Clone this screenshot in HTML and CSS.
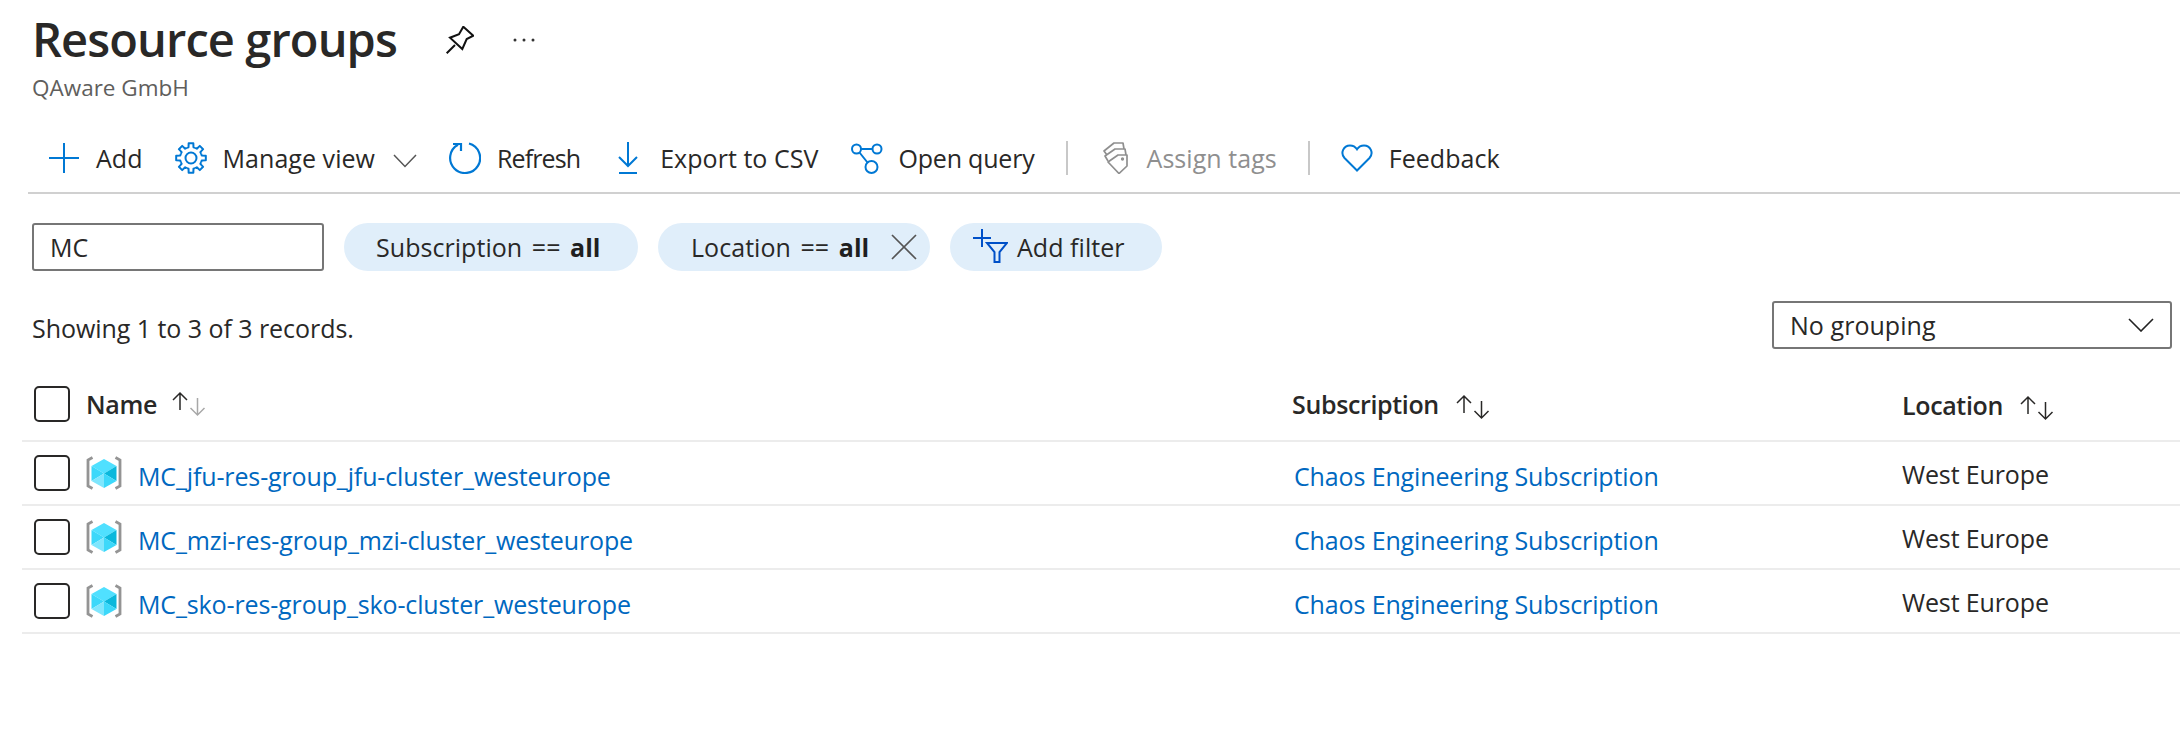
FILE: index.html
```html
<!DOCTYPE html>
<html lang="en">
<head>
<meta charset="utf-8">
<title>Resource groups</title>
<link rel="stylesheet" href="styles.css">
</head>
<body>
<svg class="defs" width="0" height="0" aria-hidden="true">
  <symbol id="rg" viewBox="0 0 36 36">
    <path d="M6.500 2.500 2 5V31L6.500 33.500" fill="none" stroke="#949494" stroke-width="2.800"/>
    <path d="M29.500 2.500 34 5V31L29.500 33.500" fill="none" stroke="#949494" stroke-width="2.800"/>
    <path d="M18 4 30.500 11 18 18.500 5.500 11Z" fill="#50e0ff"/>
    <path d="M30.500 11V26L18 18.500Z" fill="#0ab8dc"/>
    <path d="M5.500 11V26L18 18.500Z" fill="#3cd8fa"/>
    <path d="M5.500 26 18 18.500V33Z" fill="#7fe6fd"/>
    <path d="M30.500 26 18 18.500V33Z" fill="#3cd8fa"/>
  </symbol>
  <symbol id="sort" viewBox="0 0 34 26">
    <path d="M8 19V2M1 9 8 2l7 7" fill="none" stroke="currentColor" stroke-width="1.500"/>
  </symbol>
  <symbol id="sort-down" viewBox="0 0 34 26">
    <path d="M25.500 7V24M18.500 17l7 7 7-7" fill="none" stroke="currentColor" stroke-width="1.500"/>
  </symbol>
  <symbol id="tooth" viewBox="0 0 32 32">
    <path d="M11.790 5.840 13.530 5.280 13.650 1.180H18.350L18.470 5.280 20.210 5.840" fill="none" stroke="#0078d4" stroke-width="2" stroke-linejoin="round"/>
  </symbol>
</svg>

<header class="title-row">
  <div class="title-line">
    <h1 class="title">Resource groups</h1>
    <svg class="pin" viewBox="0 0 29 28" width="29" height="28"><path d="M1.700 27.300 10 19M18.300 .7 28.300 9.700 21.700 13 17.300 23 5 11.700 14 8.300Z" fill="none" stroke="#111" stroke-width="2"/></svg>
    <svg class="more" viewBox="0 0 24 4" width="24" height="4"><circle cx="3" cy="2" r="1.500"/><circle cx="12" cy="2" r="1.500"/><circle cx="21" cy="2" r="1.500"/></svg>
  </div>
  <div class="subtitle">QAware GmbH</div>
</header>

<nav class="toolbar">
  <div class="tool">
    <svg class="ico" viewBox="0 0 32 32"><path d="M16 1V31M1 16H31" fill="none" stroke="#0078d4" stroke-width="2"/></svg>
    <span>Add</span>
  </div>
  <div class="tool">
    <svg class="ico" viewBox="0 0 32 32">
      <circle cx="16" cy="16" r="5.500" fill="none" stroke="#0078d4" stroke-width="2"/>
      <use href="#tooth" width="32" height="32"/>
      <use href="#tooth" width="32" height="32" transform="rotate(45 16 16)"/>
      <use href="#tooth" width="32" height="32" transform="rotate(90 16 16)"/>
      <use href="#tooth" width="32" height="32" transform="rotate(135 16 16)"/>
      <use href="#tooth" width="32" height="32" transform="rotate(180 16 16)"/>
      <use href="#tooth" width="32" height="32" transform="rotate(225 16 16)"/>
      <use href="#tooth" width="32" height="32" transform="rotate(270 16 16)"/>
      <use href="#tooth" width="32" height="32" transform="rotate(315 16 16)"/>
    </svg>
    <span>Manage view</span>
    <svg class="chev" viewBox="0 0 24 14"><path d="M1 1 12 12.500 23 1" fill="none" stroke="#555" stroke-width="1.500"/></svg>
  </div>
  <div class="tool">
    <svg class="ico" viewBox="0 0 32 32"><path d="M20 1.500A15 15 0 1 1 9 2.800M4 2H12V9" fill="none" stroke="#0078d4" stroke-width="2.200"/></svg>
    <span class="tight">Refresh</span>
  </div>
  <div class="tool">
    <svg class="ico" viewBox="0 0 32 32"><path d="M16 0V24M7 15 16 24l9-9M7 31H25" fill="none" stroke="#0078d4" stroke-width="2"/></svg>
    <span>Export to CSV</span>
  </div>
  <div class="tool">
    <svg class="ico" viewBox="0 0 32 32"><g fill="none" stroke="#0078d4" stroke-width="2"><circle cx="5.500" cy="7" r="4.500"/><circle cx="26" cy="7" r="4.500"/><circle cx="20.500" cy="25" r="6"/><path d="M10 7H21.500M8.500 10.500 16.500 20.500"/></g></svg>
    <span class="snug">Open query</span>
  </div>
  <i class="sep"></i>
  <div class="tool tool-off">
    <svg class="ico" viewBox="0 0 32 32"><g fill="none" stroke="#8f8f8f" stroke-width="1.700" stroke-linejoin="round"><path d="M8 13 5 9 15 1H24L25 7"/><path d="M9 19 6 14 16 7H26L27 13"/><path d="M9 20 19 13H28V24L20 31.500Z" fill="#fff"/><circle cx="23.500" cy="17" r=".8"/></g></svg>
    <span>Assign tags</span>
  </div>
  <i class="sep"></i>
  <div class="tool">
    <svg class="ico" viewBox="0 0 32 32"><path d="M16 28.500 3.500 16C-1 11 2.500 3.500 9 3.500c3 0 5.500 1.500 7 3.800 1.500-2.300 4-3.800 7-3.800 6.500 0 10 7.500 5.500 12.500Z" fill="none" stroke="#0078d4" stroke-width="2"/></svg>
    <span>Feedback</span>
  </div>
</nav>

<section class="filters">
  <div class="search">MC</div>
  <div class="pill pill-sub"><span>Subscription == <b>all</b></span></div>
  <div class="pill pill-loc"><span>Location == <b>all</b></span>
    <svg class="x" viewBox="0 0 26 26"><path d="M1 1 25 25M25 1 1 25" fill="none" stroke="#555" stroke-width="1.700"/></svg>
  </div>
  <div class="pill pill-add">
    <svg class="funnel" viewBox="0 0 36 36"><path d="M10 1V19M1 10H19M15 15H35L27.500 24V34H22.500V24Z" fill="none" stroke="#0050c8" stroke-width="2"/></svg>
    <span>Add filter</span>
  </div>
</section>

<section class="summary">
  <div class="count">Showing 1 to 3 of 3 records.</div>
  <div class="group">
    <span>No grouping</span>
    <svg class="chev-g" viewBox="0 0 26 14"><path d="M1 1 13 13 25 1" fill="none" stroke="#222" stroke-width="1.600"/></svg>
  </div>
</section>

<section class="table">
  <div class="row head">
    <span class="check"></span>
    <div class="cell-name"><b>Name</b><span class="sort"><svg width="34" height="26"><use href="#sort"/></svg><svg class="muted" width="34" height="26"><use href="#sort-down"/></svg></span></div>
    <div class="cell-sub head-sub"><b>Subscription</b><span class="sort"><svg width="34" height="26"><use href="#sort"/></svg><svg width="34" height="26"><use href="#sort-down"/></svg></span></div>
    <div class="cell-loc"><b>Location</b><span class="sort"><svg width="34" height="26"><use href="#sort"/></svg><svg width="34" height="26"><use href="#sort-down"/></svg></span></div>
  </div>
  <div class="row">
    <span class="check"></span>
    <div class="cell-name"><svg class="rg" width="36" height="36"><use href="#rg"/></svg><a class="link">MC_jfu-res-group_jfu-cluster_westeurope</a></div>
    <a class="link cell-sub">Chaos Engineering Subscription</a>
    <div class="cell-loc">West Europe</div>
  </div>
  <div class="row">
    <span class="check"></span>
    <div class="cell-name"><svg class="rg" width="36" height="36"><use href="#rg"/></svg><a class="link">MC_mzi-res-group_mzi-cluster_westeurope</a></div>
    <a class="link cell-sub">Chaos Engineering Subscription</a>
    <div class="cell-loc">West Europe</div>
  </div>
  <div class="row">
    <span class="check"></span>
    <div class="cell-name"><svg class="rg" width="36" height="36"><use href="#rg"/></svg><a class="link">MC_sko-res-group_sko-cluster_westeurope</a></div>
    <a class="link cell-sub">Chaos Engineering Subscription</a>
    <div class="cell-loc">West Europe</div>
  </div>
</section>
</body>
</html>
```
FILE: styles.css
```css
* { box-sizing: border-box; }
html, body { margin: 0; height: 100%; overflow: hidden; }
body {
  background: #fff;
  color: #292827;
  font-family: "Open Sans", "Noto Sans", sans-serif;
  font-size: 25px;
  letter-spacing: 0.05px;
  padding: 0 8px 0 0;
}
.defs { position: absolute; }

.title-row { padding: 7px 0 0 32px; height: 108px; }
.title-line { display: flex; align-items: center; height: 64px; }
.title { margin: 0; font-size: 47px; font-weight: 600; letter-spacing: -0.9px; line-height: 64px; color: #292827; }
.pin { margin-left: 48px; margin-top: 2px; }
.more { margin-left: 38px; margin-top: 2px; fill: #333; }
.subtitle { font-size: 22.500px; color: #605e5c; line-height: 30px; letter-spacing: 0; margin-top: 2px; }

.toolbar {
  display: flex; align-items: center; gap: 32px;
  height: 86px; margin-left: 28px; padding: 16px 0 0 20px; margin-right: -8px;
  border-bottom: 2px solid #d0d0d0;
}
.tool { display: flex; align-items: center; gap: 16px; }
.tight { letter-spacing: -0.9px; }
.snug { letter-spacing: -0.2px; }
.ico { width: 32px; height: 32px; flex: none; }
.chev { width: 24px; height: 14px; margin-left: 2px; margin-top: 6px; }
.tool-off { color: #8f8f8f; }
.sep { width: 2px; height: 34px; background: #c8c8c8; margin: 0 -1px; }

.filters { display: flex; align-items: center; gap: 20px; margin: 29px 0 0 32px; height: 48px; }
.search {
  width: 292px; height: 48px; padding: 0 16px;
  border: 2px solid #767676; border-radius: 3px;
  display: flex; align-items: center;
}
.pill { height: 48px; border-radius: 24px; background: #e0eefa; display: flex; align-items: center; white-space: pre; }
.pill-sub, .pill-loc { word-spacing: 3px; }
.pill b { font-weight: 700; color: #1f1f1f; }
.pill-sub { width: 294px; padding-left: 32px; }
.pill-loc { width: 272px; padding-left: 33px; gap: 22px; }
.pill-add { width: 212px; padding-left: 22px; gap: 9px; }
.x { width: 26px; height: 26px; flex: none; }
.funnel { width: 36px; height: 36px; margin-top: -2px; flex: none; }

.summary { display: flex; align-items: center; justify-content: space-between; margin: 30px 0 0 32px; height: 48px; }
.count { margin-top: 6px; letter-spacing: -0.05px; }
.group {
  width: 400px; height: 48px; padding: 0 16px;
  border: 2px solid #767676; border-radius: 3px;
  display: flex; align-items: center; justify-content: space-between;
}
.chev-g { width: 26px; height: 14px; }

.table { margin: 33px -8px 0 22px; letter-spacing: -0.13px; }
.row {
  display: grid; grid-template-columns: 52px 1208px 608px 1fr; align-items: center;
  height: 64px; padding-left: 12px;
  border-bottom: 2px solid #ececec;
}
.row.head { height: 60px; padding-bottom: 14px; }
.check { width: 36px; height: 36px; border: 2px solid #292827; border-radius: 5px; display: block; }
.row b { font-weight: 600; letter-spacing: -0.35px; }
.cell-name { display: flex; align-items: center; gap: 16px; }
.head .cell-name { gap: 0; }
.rg { flex: none; }
.link { color: #0068c0; }
.cell-name .link, .row > .link { margin-top: 6px; }
.row > .cell-loc { margin-top: 2px; }
.head-sub { margin-left: -2px; }
.sort { display: inline-flex; margin-left: 17px; color: #292827; vertical-align: middle; }
.head .cell-name .sort { margin-left: 15px; }
.sort svg + svg { margin-left: -34px; }
.sort .muted { color: #a8a8a8; }
```
